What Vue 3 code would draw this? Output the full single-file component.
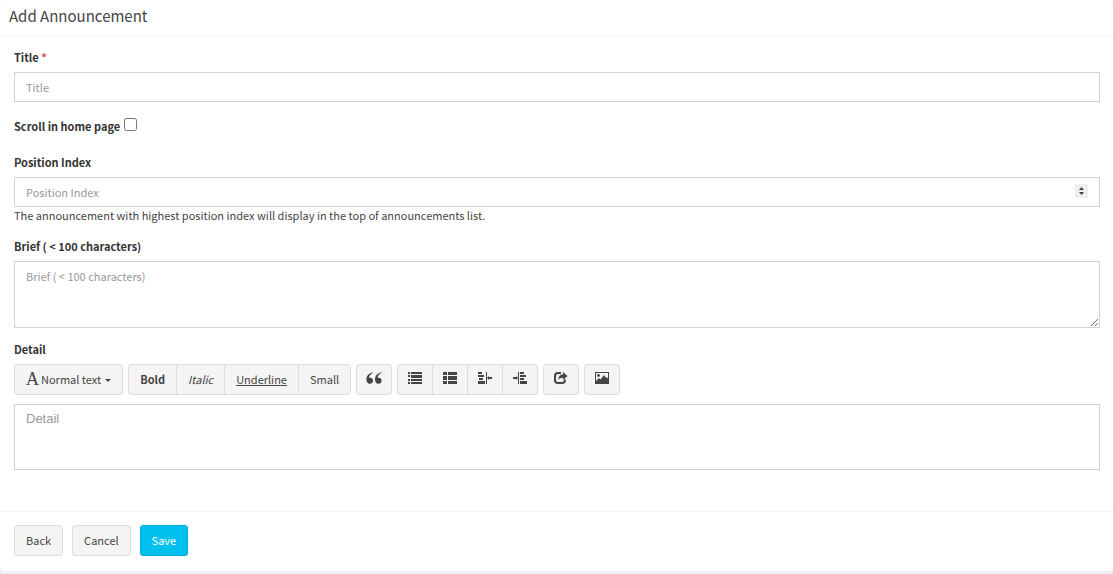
<script setup>
import { ref } from 'vue'

const form = ref({ title: '', scroll: false, position: '', brief: '', detail: '' })
</script>

<template>
  <form class="box" @submit.prevent>
    <header class="box-header">
      <h3>Add Announcement</h3>
    </header>

    <div class="box-body">
      <div class="group title-group">
        <label for="title">Title <span class="required">*</span></label>
        <input id="title" v-model="form.title" class="control" type="text" placeholder="Title" />
      </div>

      <div class="group check-group">
        <label for="scroll">Scroll in home page</label>
        <input id="scroll" v-model="form.scroll" type="checkbox" />
      </div>

      <div class="group position-group">
        <label for="position">Position Index</label>
        <input id="position" v-model="form.position" class="control" type="number" placeholder="Position Index" />
        <p class="help">The announcement with highest position index will display in the top of announcements list.</p>
      </div>

      <div class="group brief-group">
        <label for="brief">Brief ( &lt; 100 characters)</label>
        <textarea id="brief" v-model="form.brief" class="control area" placeholder="Brief ( &lt; 100 characters)"></textarea>
      </div>

      <div class="group">
        <label for="detail">Detail</label>
        <div class="toolbar">
          <div class="btn-group">
            <button type="button" class="btn style-btn"><span class="font-icon">A</span>Normal text<span class="caret"></span></button>
          </div>
          <div class="btn-group">
            <button type="button" class="btn"><b>Bold</b></button>
            <button type="button" class="btn"><i>Italic</i></button>
            <button type="button" class="btn"><u>Underline</u></button>
            <button type="button" class="btn">Small</button>
          </div>
          <div class="btn-group">
            <button type="button" class="btn icon-btn" aria-label="Quote">
              <svg class="quote" viewBox="0 0 16 12"><path d="M6.8 0.2C3 1 .4 3.8.4 7.600c0 2.500 1.300 4.200 3.400 4.200 1.900 0 3.200-1.300 3.200-3.100C7 6.900 5.800 5.700 4.200 5.700c-.5 0-.9.1-1.200.2C3.200 3.700 4.600 1.900 7 .8zM15.400.2C11.600 1 9 3.800 9 7.600c0 2.500 1.300 4.200 3.400 4.200 1.900 0 3.200-1.300 3.200-3.100 0-1.800-1.200-3-2.800-3-.5 0-.9.1-1.200.2.2-2.200 1.600-4 4-5.100z" /></svg>
            </button>
          </div>
          <div class="btn-group">
            <button type="button" class="btn icon-btn" aria-label="Unordered list">
              <svg viewBox="0 0 14 12"><path d="M0 0h2v2H0zM3 0h11v2H3zM0 3h2v2H0zM3 3h11v3H3zM0 7h2v2H0zM3 7h11v2H3zM0 10h2v2H0zM3 10h11v2H3z" /></svg>
            </button>
            <button type="button" class="btn icon-btn" aria-label="Ordered list">
              <svg viewBox="0 0 14 12"><path d="M0 0h4v3H0zM5 0h9v3H5zM0 4h4v4H0zM5 4h9v4H5zM0 9h4v3H0zM5 9h9v3H5z" /></svg>
            </button>
            <button type="button" class="btn icon-btn" aria-label="Outdent">
              <svg viewBox="0 0 14 12"><path d="M0 0h4v2H0zM0 3h6v2H0zM1 6h4v2H1zM0 9h7v3H0zM8 0h1v12H8zM11 4v1h3v2h-3v1L9 6z" /></svg>
            </button>
            <button type="button" class="btn icon-btn" aria-label="Indent">
              <svg viewBox="0 0 14 12"><path d="M0 5h3V4l2 2-2 2V7H0zM5 0h1v12H5zM7 0h4v2H7zM7 3h6v2H7zM7 6h4v2H7zM7 9h7v3H7z" /></svg>
            </button>
          </div>
          <div class="btn-group">
            <button type="button" class="btn icon-btn" aria-label="Insert link">
              <svg viewBox="0 0 14 12"><path d="M7 1H4C2.300 1 1 2.300 1 4v4c0 1.700 1.300 3 3 3h4c1.700 0 3-1.300 3-3V7.500" class="stroke" /><path d="M9 0l4.500 4L9 8V5.700C6.700 5.600 5.400 6.300 4.300 8 4.300 4.900 5.900 2.600 9 2.300z" /></svg>
            </button>
          </div>
          <div class="btn-group">
            <button type="button" class="btn icon-btn" aria-label="Insert image">
              <svg viewBox="0 0 14 12"><path fill-rule="evenodd" d="M0 0h14v12H0zM1 1v10h12V1z" /><circle cx="3.500" cy="3.500" r="1.400" /><path d="M1 11V9l3-3 1.500 1.500L9 3l2 3 1-1 1 2v4z" /></svg>
            </button>
          </div>
        </div>
        <textarea id="detail" v-model="form.detail" class="control area detail" placeholder="Detail"></textarea>
      </div>
    </div>

    <footer class="box-footer">
      <button type="button" class="btn">Back</button>
      <button type="button" class="btn">Cancel</button>
      <button type="submit" class="btn primary">Save</button>
    </footer>
  </form>
</template>

<style>
body {
  margin: 0;
  background: #ecf0f5;
}
</style>

<style scoped>
.box,
.box * {
  box-sizing: border-box;
}

.box {
  background: #fff;
  border-radius: 3px;
  box-shadow: 0 1px 1px rgba(0, 0, 0, 0.1);
  color: #444;
  font: 11px/18px "Noto Sans CJK SC", sans-serif;
}

.box-header {
  padding: 6px 9px 9px;
  border-bottom: 1px solid #f4f4f4;
}

h3 {
  margin: 0;
  font-size: 15px;
  line-height: 20px;
  font-weight: 400;
}

.box-body {
  padding: 12px 13px 41px 14px;
}

.group label {
  display: block;
  margin-bottom: 6px;
  font-weight: 700;
  color: #333;
}

.title-group {
  margin-bottom: 15px;
}

.check-group {
  display: flex;
  margin-bottom: 12px;
}

.check-group input {
  width: 13px;
  height: 13px;
  margin: 1px 4px;
}

.position-group {
  margin-bottom: 14px;
}

.brief-group {
  margin-bottom: 12px;
}

.group .required {
  color: #dd4b39;
}

.control {
  display: block;
  width: 100%;
  height: 30px;
  margin: 0;
  padding: 5px 11px;
  border: 1px solid #d2d2d6;
  border-radius: 0;
  background: #fff;
  color: #555;
  font: inherit;
}

.control::placeholder {
  color: #999;
  opacity: 1;
}

.control::-webkit-inner-spin-button {
  width: 13px;
  height: 14px;
  appearance: none;
  opacity: 1;
  background: #efefef url("data:image/svg+xml,%3Csvg xmlns='http://www.w3.org/2000/svg' width='13' height='14'%3E%3Cpath d='M4 6h5L6.500 3zM4 8h5l-2.500 3z' fill='%23444'/%3E%3C/svg%3E") center no-repeat;
}

.area {
  height: 67px;
  resize: vertical;
}

.detail {
  height: 66px;
  font: 13px/18px "Liberation Sans", sans-serif;
  resize: none;
}

.help {
  margin: 0;
  line-height: 16px;
}

.toolbar {
  display: flex;
  flex-wrap: wrap;
  gap: 5px;
  margin-bottom: 9px;
}

.btn-group {
  display: flex;
}

.btn {
  height: 31px;
  margin: 0;
  padding: 0 11px 2px;
  border: 1px solid #ddd;
  border-radius: 3px;
  background: #f4f4f4;
  color: #444;
  font: inherit;
  white-space: nowrap;
}

.btn-group .btn + .btn {
  margin-left: -1px;
  border-top-left-radius: 0;
  border-bottom-left-radius: 0;
}

.btn-group .btn:not(:last-child) {
  border-top-right-radius: 0;
  border-bottom-right-radius: 0;
}

.style-btn {
  display: flex;
  align-items: center;
}

.font-icon {
  margin-right: 2px;
  font: 18px/18px "Liberation Serif", serif;
}

.caret {
  margin: 3px 0 0 4px;
  border: 3px solid transparent;
  border-top-color: currentColor;
  border-bottom: 0;
}

.btn-group .icon-btn {
  display: flex;
  align-items: center;
  justify-content: center;
  width: 36px;
  padding: 0 0 3px;
}

.icon-btn svg {
  width: 14px;
  height: 12px;
  fill: #444;
}

.icon-btn .quote {
  width: 16px;
}

.icon-btn .stroke {
  fill: none;
  stroke: #444;
  stroke-width: 2;
}

.box-footer {
  display: flex;
  gap: 9px;
  padding: 13px 14px 15px;
  border-top: 1px solid #f4f4f4;
}

.box-footer .primary {
  border-color: #00acd6;
  background: #00c0ef;
  color: #fff;
}
</style>
